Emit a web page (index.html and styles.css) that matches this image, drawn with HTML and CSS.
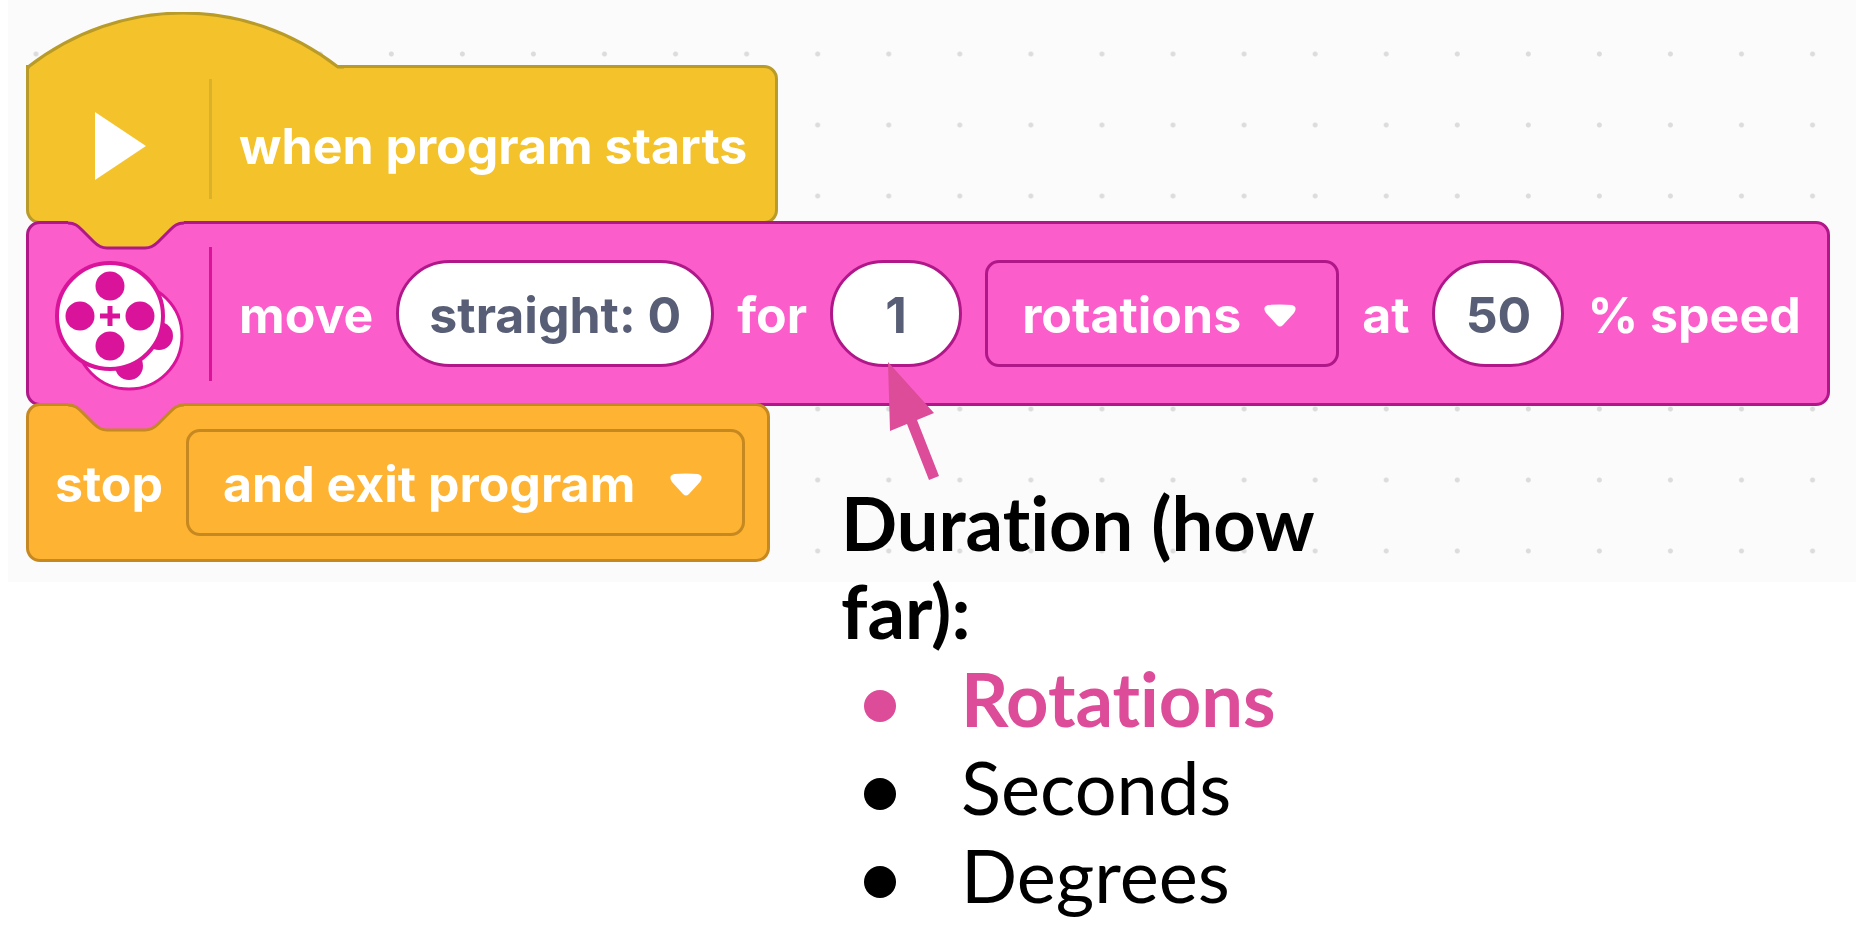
FILE: index.html
```html
<!DOCTYPE html>
<html lang="en">
<head>
    <meta charset="UTF-8">
    <meta name="viewport" content="width=device-width, initial-scale=1.0">
    <title>Move for a duration</title>
    <link rel="stylesheet" href="styles.css">
</head>
<body>
    <main class="slide">
        <section class="canvas">
            <svg class="hat" viewBox="0 0 318 57" aria-hidden="true">
                <path class="hat-fill" d="M2 57V55C95 -17 219 -17 312 55L314 57Z"/>
                <path class="hat-line" d="M2 57V55C95 -17 219 -17 312 55H318"/>
            </svg>
            <div class="block block-start">
                <svg class="play" viewBox="0 0 52 70" aria-hidden="true">
                    <path d="M0 1L51 35L0 69Z"/>
                </svg>
                <span class="divider"></span>
                <span>when program starts</span>
            </div>

            <div class="block block-move">
                <svg class="notch" viewBox="0 0 120 30" aria-hidden="true">
                    <path class="notch-fill" d="M2 0V2c7 0 10 3 14 7l12 12c4 4 7 6 13 6h38c6 0 9 -2 13 -6l12 -12c4 -4 7 -7 14 -7V0Z"/>
                    <path class="notch-line" d="M2 2c7 0 10 3 14 7l12 12c4 4 7 6 13 6h38c6 0 9 -2 13 -6l12 -12c4 -4 7 -7 14 -7"/>
                </svg>
                <svg class="wheels" viewBox="0 0 130 131" aria-hidden="true">
                    <circle class="wheel" cx="75" cy="76" r="53"/>
                    <circle class="hole" cx="75" cy="106" r="14"/>
                    <circle class="hole" cx="105" cy="76" r="14"/>
                    <circle class="wheel wheel-front" cx="56" cy="56" r="53"/>
                    <circle class="hole" cx="56" cy="26" r="14.5"/>
                    <circle class="hole" cx="56" cy="86" r="14.5"/>
                    <circle class="hole" cx="26" cy="56" r="14.5"/>
                    <circle class="hole" cx="86" cy="56" r="14.5"/>
                    <path class="plus" d="M46 56H66M56 46V66"/>
                </svg>
                <span class="divider"></span>
                <label for="direction">move</label>
                <input class="pill pill-wide" id="direction" type="text" value="straight: 0">
                <label for="amount">for</label>
                <input class="pill" id="amount" type="text" value="1">
                <div class="picker">
                    <select id="unit" aria-label="Unit">
                        <option>rotations</option>
                        <option>seconds</option>
                        <option>degrees</option>
                    </select>
                    <svg class="caret" viewBox="0 0 34 24" aria-hidden="true">
                        <path d="M5 1Q17 0 29 1Q35 3 31 9L20 21Q17 24 14 21L3 9Q-1 3 5 1Z"/>
                    </svg>
                </div>
                <label for="speed">at</label>
                <input class="pill" id="speed" type="text" value="50">
                <label for="speed">% speed</label>
            </div>

            <div class="block block-stop">
                <svg class="notch" viewBox="0 0 120 30" aria-hidden="true">
                    <path class="notch-fill" d="M2 0V2c7 0 10 3 14 7l12 12c4 4 7 6 13 6h38c6 0 9 -2 13 -6l12 -12c4 -4 7 -7 14 -7V0Z"/>
                    <path class="notch-line" d="M2 2c7 0 10 3 14 7l12 12c4 4 7 6 13 6h38c6 0 9 -2 13 -6l12 -12c4 -4 7 -7 14 -7"/>
                </svg>
                <label for="ending">stop</label>
                <div class="picker picker-wide">
                    <select id="ending">
                        <option>and exit program</option>
                    </select>
                    <svg class="caret" viewBox="0 0 34 24" aria-hidden="true">
                        <path d="M5 1Q17 0 29 1Q35 3 31 9L20 21Q17 24 14 21L3 9Q-1 3 5 1Z"/>
                    </svg>
                </div>
            </div>
        </section>

        <section class="callout">
            <svg class="arrow" viewBox="0 0 52 120" aria-hidden="true">
                <path d="M0 0L46 51L29 58L51 114L41 118L19 62L2 69Z"/>
            </svg>
            <h1>Duration (how far):</h1>
            <ul>
                <li class="current">Rotations</li>
                <li>Seconds</li>
                <li>Degrees</li>
            </ul>
        </section>
    </main>
</body>
</html>
```
FILE: styles.css
```css
* {
    box-sizing: border-box;
}

body {
    margin: 0;
    background: #fff;
    overflow-x: hidden;
}

/* dotted workspace */
.canvas {
    margin-left: 8px;
    padding: 12px 0 20px 18px;
    background-color: #fbfbfb;
    background-image: radial-gradient(circle at 28px 54px, #dcdcdc 2px, transparent 3px);
    background-size: 71px 71px;
    background-repeat: round repeat;
    font-family: Inter, "Liberation Sans", sans-serif;
    font-size: 50px;
    font-weight: 700;
    line-height: 60px;
    color: #fff;
}

.block {
    --line: #b89b28;
    --fill: #f4c22b;
    --above: #f4c22b;
    position: relative;
    display: flex;
    align-items: center;
    width: max-content;
    border: 3px solid var(--line);
    border-radius: 14px;
    background: var(--fill);
    white-space: nowrap;
}

.block-start {
    height: 159px;
    padding: 3px 28px 0 66px;
    border-top-left-radius: 0;
}

.block-move {
    --line: #b0188a;
    --fill: #fb5dcb;
    height: 185px;
    margin-top: -3px;
    padding: 0 26px 0 25px;
    gap: 23px;
}

.block-stop {
    --line: #c68820;
    --fill: #feb332;
    --above: #fb5dcb;
    height: 159px;
    margin-top: -3px;
    padding: 0 22px 0 26px;
    gap: 23px;
}

.block label {
    padding-top: 3px;
}

.hat {
    position: relative;
    z-index: 1;
    display: block;
    width: 318px;
    height: 57px;
    margin-bottom: -4px;
}

.hat-fill {
    fill: #f4c22b;
}

.hat-line {
    fill: none;
    stroke: #b89b28;
    stroke-width: 3;
}

.notch {
    position: absolute;
    top: -3px;
    left: 37px;
    width: 120px;
    height: 30px;
}

.notch-fill {
    fill: var(--above);
}

.notch-line {
    fill: none;
    stroke: var(--line);
    stroke-width: 3;
}

.play {
    width: 52px;
    height: 70px;
    fill: #fff;
}

.divider {
    width: 3px;
    height: 120px;
    margin: 0 27px 14px 62px;
    background: #dbb02a;
}

.block-move .divider {
    height: 134px;
    margin: 0 4px 0 2px;
    background: #d9149a;
}

.wheels {
    width: 130px;
    height: 131px;
    margin-top: 24px;
}

.wheel {
    fill: #fff;
    stroke: #d9149a;
    stroke-width: 3;
}

.wheel-front {
    stroke-width: 4;
}

.hole {
    fill: #d9149a;
}

.plus {
    stroke: #d9149a;
    stroke-width: 5;
}

.pill,
.picker select {
    display: block;
    height: 107px;
    margin: 0;
    border: 3px solid var(--line);
    font: inherit;
}

.pill {
    width: 132px;
    padding: 3px 0 0;
    border-radius: 54px;
    background: #fff;
    color: #575e75;
    text-align: center;
}

.pill-wide {
    width: 318px;
}

.picker {
    position: relative;
}

.picker select {
    appearance: none;
    width: 354px;
    padding: 3px 34px 0;
    border-radius: 14px;
    background: transparent;
    color: #fff;
}

.picker-wide select {
    width: 559px;
}

.picker option {
    color: #575e75;
}

.caret {
    position: absolute;
    top: 44px;
    right: 42px;
    width: 34px;
    height: 24px;
    fill: #fff;
    pointer-events: none;
}

/* note under the move block */
.callout {
    position: relative;
    width: 500px;
    margin: -103px 0 0 841px;
    font-family: Lato, sans-serif;
    font-size: 74px;
    font-variant-ligatures: none;
    line-height: 88px;
    color: #000;
}

.arrow {
    position: absolute;
    top: -117px;
    left: 47px;
    width: 52px;
    height: 120px;
    fill: #dd4c98;
}

.callout h1 {
    margin: 0;
    font-size: inherit;
    font-weight: 700;
}

.callout ul {
    margin: 0;
    padding: 0 0 0 23px;
    list-style: none;
}

.callout li {
    display: flex;
    align-items: center;
    gap: 65px;
}

.callout li::before {
    content: "";
    width: 32px;
    height: 32px;
    margin-top: 13px;
    border-radius: 50%;
    background: currentColor;
}

.callout .current {
    color: #dd4c98;
    font-weight: 700;
}
```
